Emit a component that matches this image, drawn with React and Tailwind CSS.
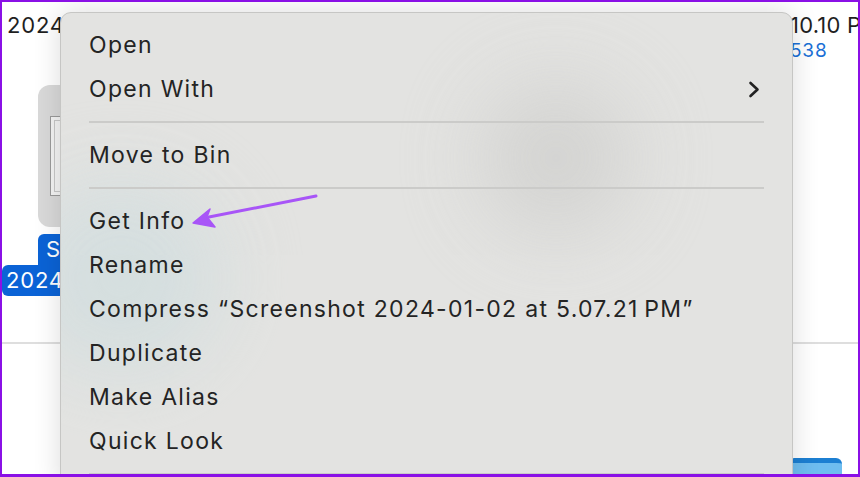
import React from 'react';

const items = [
  { label: 'Open' },
  { label: 'Open With', submenu: true },
  { sep: true },
  { label: 'Move to Bin' },
  { sep: true },
  { label: 'Get Info' },
  { label: 'Rename' },
  { label: 'Compress \u201CScreenshot 2024-01-02 at 5.07.21\u202FPM\u201D' },
  { label: 'Duplicate' },
  { label: 'Make Alias' },
  { label: 'Quick Look' },
  { sep: true },
];

const Chevron = () => (
  <svg width="12" height="17" viewBox="0 0 12 17" className="mr-[3px]">
    <path d="M2.5 2 L9.5 8.5 L2.5 15" fill="none" stroke="#222" strokeWidth="2.6" strokeLinecap="round" strokeLinejoin="round" />
  </svg>
);

const ContextMenu = () => (
  <div className="absolute left-[58px] top-[10px] w-[733px] h-[480px] rounded-[11px] border border-[#c6c6c4] bg-[#e3e3e1] shadow-[0_0_28px_rgba(0,0,0,0.14)] overflow-hidden">
    {/* blur of what lies behind the menu */}
    <div className="absolute left-[420px] top-[70px] w-[150px] h-[150px] rounded-full bg-[#cfcfcd] blur-2xl opacity-80" />
    <div className="absolute left-[-40px] top-[170px] w-[200px] h-[190px] rounded-full bg-[#d3dedf] blur-2xl opacity-90" />

    <div className="relative flex flex-col pt-[10px]">
      {items.map((item, i) =>
        item.sep ? (
          <div key={i} className="h-[22px] flex items-center pl-[28px] pr-[28px]">
            <div className="h-[2px] w-full bg-[#cbcbc9]" />
          </div>
        ) : (
          <div key={i} className="h-[44px] flex items-center justify-between pl-[28px] pr-[29px] text-[23px] text-[#242424] tracking-[1.3px]">
            <span>{item.label}</span>
            {item.submenu && <Chevron />}
          </div>
        )
      )}
    </div>

    {/* annotation arrow */}
    <svg className="absolute left-0 top-0" width="733" height="480" viewBox="58 10 733 480">
      <path d="M313 193 L206 214" stroke="#a855f7" strokeWidth="3" strokeLinecap="round" />
      <path d="M190 220 L207 206 L204 214 L212 224 Z" fill="#a855f7" stroke="#a855f7" strokeWidth="1.5" strokeLinejoin="round" />
    </svg>
  </div>
);

export default function App() {
  return (
    <div
      className="relative w-[860px] h-[477px] overflow-hidden bg-white border-l-[2px] border-t-[2px] border-r-[2px] border-b-[3px] border-[#8a10e6]"
      style={{ fontFamily: 'Inter, "Noto Sans", sans-serif' }}
    >
      <div className="flex flex-col h-full">
        <div className="flex justify-between h-[340px]">
          {/* left file column */}
          <div className="flex flex-col w-[200px]">
            <div className="pl-[5px] pt-[9px] text-[22px] leading-[28px] text-[#1f1f1f] tracking-[0.8px]">2024</div>
            <div className="ml-[36px] mt-[46px] w-[150px] h-[142px] rounded-[12px] bg-[#d9d9d9] flex items-center">
              <div className="ml-[12px] w-[110px] h-[80px] bg-[#f4f4f4] border border-[#9a9a9a] p-[3px]">
                <div className="w-full h-full border border-[#c8c8c8]" />
              </div>
            </div>
            <div className="flex flex-col items-start mt-[7px] text-[22px] leading-[31px] text-white tracking-[0.8px]">
              <div className="ml-[36px] pl-[8px] pr-[40px] rounded-t-[6px] bg-[#0b63d6]">S</div>
              <div className="pl-[4px] pr-[30px] rounded-[6px] bg-[#0b63d6]">2024</div>
            </div>
          </div>
          {/* right file column */}
          <div className="flex flex-col w-[68px] overflow-hidden whitespace-nowrap pt-[9px]">
            <div className="text-[22px] leading-[28px] text-[#1f1f1f] tracking-[0.2px]">10.10 P</div>
            <div className="text-[19px] leading-[24px] text-[#1a6fd6] tracking-[0.8px]">538</div>
          </div>
        </div>
        <div className="h-[2px] bg-[#dedede]" />
        <div className="flex-1 flex justify-end items-end pr-[16px]">
          <div className="w-[50px] h-[16px] rounded-tr-[6px] rounded-tl-[2px] bg-[#6ebdf0] border-t-[5px] border-[#1c7fd2]" />
        </div>
      </div>
      <ContextMenu />
    </div>
  );
}
